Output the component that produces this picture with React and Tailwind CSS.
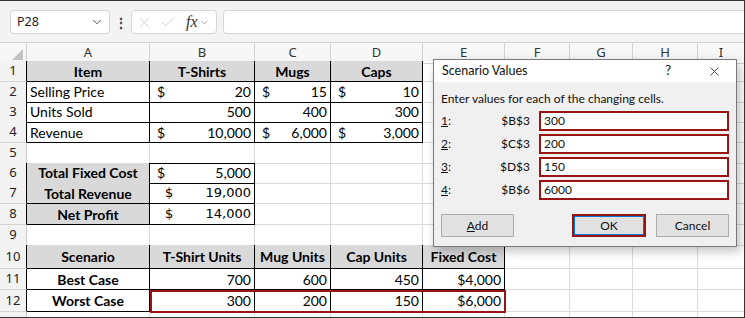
import React from "react";
import { ChevronDown, X, Check } from "lucide-react";

const LETTERS = ["A", "B", "C", "D", "E", "F", "G", "H", "I"];
const HEIGHTS = [21, 20, 20, 21, 20, 20, 21, 21, 20, 24, 21, 22, 6];

const H = "bg-[#d9d9d9] font-bold text-center";

// row -> col(1..) -> cell
const DATA = {
  1: { 1: { t: "Item", c: H }, 2: { t: "T-Shirts", c: H }, 3: { t: "Mugs", c: H }, 4: { t: "Caps", c: H } },
  2: { 1: { t: "Selling Price" }, 2: { acc: "20" }, 3: { acc: "15" }, 4: { acc: "10" } },
  3: { 1: { t: "Units Sold" }, 2: { t: "500", c: "text-right" }, 3: { t: "400", c: "text-right" }, 4: { t: "300", c: "text-right" } },
  4: { 1: { t: "Revenue" }, 2: { acc: "10,000" }, 3: { acc: "6,000" }, 4: { acc: "3,000" } },
  6: { 1: { t: "Total Fixed Cost", c: H }, 2: { acc: "5,000" } },
  7: { 1: { t: "Total Revenue", c: H }, 2: { acc: "19,000", alt: true } },
  8: { 1: { t: "Net Profit", c: H }, 2: { acc: "14,000", alt: true } },
  10: {
    1: { t: "Scenario", c: H },
    2: { t: "T-Shirt Units", c: H },
    3: { t: "Mug Units", c: H },
    4: { t: "Cap Units", c: H },
    5: { t: "Fixed Cost", c: H },
  },
  11: {
    1: { t: "Best Case", c: "font-bold text-center" },
    2: { t: "700", c: "text-right" },
    3: { t: "600", c: "text-right" },
    4: { t: "450", c: "text-right" },
    5: { t: "$4,000", c: "text-right" },
  },
  12: {
    1: { t: "Worst Case", c: "font-bold text-center" },
    2: { t: "300", c: "text-right" },
    3: { t: "200", c: "text-right" },
    4: { t: "150", c: "text-right" },
    5: { t: "$6,000", c: "text-right" },
  },
};

const boxed = (r, c) =>
  (r >= 1 && r <= 4 && c >= 1 && c <= 4) ||
  (r >= 6 && r <= 8 && c >= 1 && c <= 2) ||
  (r >= 10 && r <= 12 && c >= 1 && c <= 5);

function Cell({ r, c }) {
  const d = (DATA[r] && DATA[r][c]) || {};
  const br = boxed(r, c) || boxed(r, c + 1) ? "border-r-black" : "border-r-[#dadada]";
  const bb = boxed(r, c) || boxed(r + 1, c) ? "border-b-black" : "border-b-[#dadada]";
  return (
    <div
      className={`border-r border-b ${br} ${bb} px-[3px] flex items-center overflow-hidden whitespace-nowrap ${d.c || ""}`}
    >
      {d.acc ? (
        <div className={`flex w-full justify-between ${d.alt ? "pl-[12px] font-['DejaVu_Sans'] text-[13px]" : "pl-[4px]"}`}>
          <span>$</span>
          <span>{d.acc}</span>
        </div>
      ) : (
        <span className="w-full">{d.t}</span>
      )}
    </div>
  );
}

function Sheet() {
  const tpl = "grid-cols-[27px_123px_105px_76px_92px_82px_65px_63px_65px_47px]";
  return (
    <div className="relative">
      <div className={`grid ${tpl} h-[19px] border-t border-[#d4d4d4] bg-[#f7f7f7] font-['Noto_Sans'] text-[13px] text-[#333]`}>
        <div className="border-r border-b border-r-[#d0d0d0] border-b-black flex items-end justify-end pr-[3px] pb-[3px]">
          <div className="w-0 h-0 border-l-[11px] border-l-transparent border-b-[11px] border-b-[#c2c2c2]" />
        </div>
        {LETTERS.map((l, i) => (
          <div
            key={l}
            className={`border-r border-b border-r-[#d4d4d4] ${boxed(1, i + 1) ? "border-b-black" : "border-b-[#d4d4d4]"} flex items-center justify-center`}
          >
            {l}
          </div>
        ))}
      </div>
      {HEIGHTS.map((h, ri) => {
        const r = ri + 1;
        return (
          <div key={r} className={`grid ${tpl}`} style={{ height: h }}>
            <div
              className={`border-r border-b ${boxed(r, 1) ? "border-r-black" : "border-r-[#c8c8c8]"} border-b-[#d4d4d4] bg-[#f3f3f3] flex items-center justify-center font-['Noto_Sans'] text-[13px] text-[#222]`}
            >
              {r < 13 ? r : ""}
            </div>
            {LETTERS.map((l, ci) => (
              <Cell key={l} r={r} c={ci + 1} />
            ))}
          </div>
        );
      })}
      <div className="absolute left-[150px] top-[248px] w-[356px] h-[23px] border-2 border-[#9b1414] pointer-events-none" />
      <Dialog />
    </div>
  );
}

function Field({ n, cell, value }) {
  return (
    <div className="flex items-center h-[20px]">
      <div className="w-[30px]">
        <span className="underline">{n}</span>:
      </div>
      <div className="w-[60px] text-right pr-[1px]">{cell}</div>
      <div className="ml-[8px] flex-1 h-full border-2 border-[#9b1414] bg-white flex items-center px-[3px]">{value}</div>
    </div>
  );
}

function Dialog() {
  return (
    <div className="absolute left-[433px] top-[17px] w-[304px] h-[188px] border border-[#7a7a7a] bg-[#f0f0f0] shadow-[3px_4px_10px_rgba(0,0,0,0.25)] font-['Lato'] text-[12px] text-[#111] flex flex-col">
      <div className="h-[28px] bg-white flex items-center pl-[8px] pr-[14px]">
        <span className="text-[12.5px]">Scenario Values</span>
        <span className="ml-auto mr-[36px] text-[13px]">?</span>
        <X size={15} strokeWidth={1.2} />
      </div>
      <div className="px-[7px] pt-[9px] pb-[9px] flex flex-col">
        <div className="mb-[5px] leading-[15px]">Enter values for each of the changing cells.</div>
        <div className="flex flex-col gap-[3px]">
          <Field n="1" cell="$B$3" value="300" />
          <Field n="2" cell="$C$3" value="200" />
          <Field n="3" cell="$D$3" value="150" />
          <Field n="4" cell="$B$6" value="6000" />
        </div>
        <div className="flex mt-[14px] h-[23px]">
          <div className="w-[73px] border border-[#adadad] bg-[#e1e1e1] flex items-center justify-center">
            <span>
              <span className="underline">A</span>dd
            </span>
          </div>
          <div className="ml-auto w-[74px] border-2 border-[#9b1414] bg-[#e1e1e1] flex">
            <div className="flex-1 border border-[#0078d7] flex items-center justify-center">OK</div>
          </div>
          <div className="ml-[10px] w-[73px] border border-[#adadad] bg-[#e1e1e1] flex items-center justify-center">Cancel</div>
        </div>
      </div>
    </div>
  );
}

function FormulaBar() {
  return (
    <div className="h-[42px] bg-[#f3f3f3] flex items-start pt-[10px] pl-[10px]">
      <div className="w-[100px] h-[24px] bg-white border border-[#d6d6d6] rounded-[4px] flex items-center pl-[6px] pr-[5px] font-['Noto_Sans'] text-[12.5px] text-[#222]">
        <span>P28</span>
        <ChevronDown size={14} strokeWidth={1.6} className="ml-auto text-[#444]" />
      </div>
      <div className="w-[21px] h-[24px] flex items-center justify-center text-[#444] font-bold text-[14px]">⋮</div>
      <div className="w-[86px] h-[24px] bg-white border border-[#d6d6d6] rounded-[4px] flex items-center pl-[4px]">
        <X size={17} strokeWidth={1} className="text-[#c4c4c4]" />
        <Check size={18} strokeWidth={1} className="ml-[6px] text-[#c4c4c4]" />
        <span className="ml-[9px] font-['Liberation_Serif'] italic text-[16px] text-[#333] leading-none">fx</span>
        <ChevronDown size={11} strokeWidth={1.5} className="ml-[1px] text-[#777]" />
      </div>
      <div className="ml-[6px] flex-1 h-[24px] bg-white border border-[#d6d6d6] rounded-l-[4px] border-r-0" />
    </div>
  );
}

export default function App() {
  return (
    <div className="w-[745px] h-[318px] overflow-hidden relative bg-white font-['Lato'] text-[14px] text-black">
      <FormulaBar />
      <Sheet />
      <div className="absolute inset-0 border-t border-r border-b border-[#333] pointer-events-none" />
    </div>
  );
}
